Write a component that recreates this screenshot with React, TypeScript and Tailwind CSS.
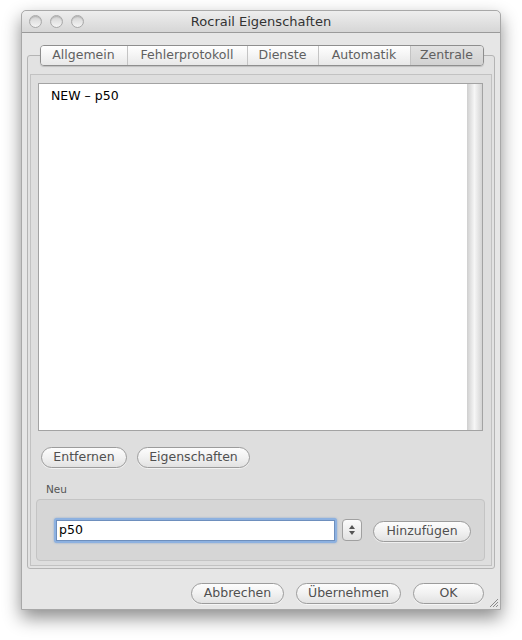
import React from "react";

const font = { fontFamily: '"Lucida Grande", "DejaVu Sans", sans-serif' };

function Pill({ label, w, className = "" }: { label: string; w: string; className?: string }) {
  return (
    <div
      className={`${w} h-[21px] rounded-full border border-[#9c9c9c] bg-gradient-to-b from-[#fdfdfd] via-[#f1f1f1] to-[#e2e2e2] shadow-[0_1px_0_rgba(255,255,255,0.6)] flex items-center justify-center text-[12.5px] text-[#505050] ${className}`}
    >
      {label}
    </div>
  );
}

function Light() {
  return (
    <div className="w-[13px] h-[13px] rounded-full border border-[#a9a9a9] bg-gradient-to-b from-[#d0d0d0] via-[#e4e4e4] to-[#f4f4f4] shadow-[inset_0_1px_1px_rgba(0,0,0,0.15)]" />
  );
}

export default function App() {
  const tabs = [
    { label: "Allgemein", w: "w-[86px]" },
    { label: "Fehlerprotokoll", w: "w-[120px]" },
    { label: "Dienste", w: "w-[71px]" },
    { label: "Automatik", w: "w-[92px]" },
    { label: "Zentrale", w: "w-[73px]", sel: true },
  ];
  return (
    <div className="w-[522px] h-[640px] bg-white pt-[10px] pl-[21px]" style={font}>
      <div className="w-[480px] h-[600px] bg-[#e6e6e6] rounded-t-[5px] border border-[#a8a8a8] shadow-[0_8px_18px_rgba(0,0,0,0.45)] flex flex-col relative">
        {/* Title bar */}
        <div className="h-[22px] shrink-0 rounded-t-[5px] bg-gradient-to-b from-[#eeeeee] to-[#d6d6d6] border-b border-[#9a9a9a] flex items-center relative">
          <div className="flex gap-[8px] pl-[7px]">
            <Light />
            <Light />
            <Light />
          </div>
          <div className="absolute inset-0 flex items-center justify-center text-[13px] text-[#333333]">
            Rocrail Eigenschaften
          </div>
        </div>

        {/* Body */}
        <div className="flex-1 flex flex-col pt-[12px] px-[5px]">
          {/* Tabs */}
          <div className="flex justify-center relative z-10 pl-[1px]">
            <div className="flex h-[21px] rounded-[4px] border border-[#8e8e8e] overflow-hidden shadow-[0_1px_1px_rgba(0,0,0,0.15)]">
              {tabs.map((t, i) => (
                <div
                  key={t.label}
                  className={`${t.w} h-full flex items-center justify-center text-[12.5px] text-[#606060] ${
                    i > 0 ? "border-l border-[#c4c4c4]" : ""
                  } ${
                    t.sel
                      ? "bg-gradient-to-b from-[#e2e2e2] to-[#d2d2d2]"
                      : "bg-gradient-to-b from-[#ffffff] via-[#f4f4f4] to-[#e8e8e8]"
                  }`}
                >
                  {t.label}
                </div>
              ))}
            </div>
          </div>

          {/* Tab pane */}
          <div className="mt-[-11px] h-[514px] border border-[#b4b4b4] rounded-[3px] bg-[#e2e2e2] p-[2px] pt-[18px]">
            <div className="h-full border border-[#c2c2c2] bg-[#dedede] flex flex-col pl-[7px] pr-[8px] pt-[8px]">
              {/* List */}
              <div className="h-[348px] border border-[#a3a3a3] bg-white flex">
                <div className="flex-1 pl-[12px] pt-[3px] text-[12.5px] text-black">NEW – p50</div>
                <div className="w-[15px] h-full bg-gradient-to-r from-[#cfcfcf] via-[#f6f6f6] to-[#d4d4d4]" />
              </div>

              {/* Buttons */}
              <div className="flex gap-[10px] mt-[16px] pl-[3px]">
                <Pill label="Entfernen" w="w-[86px]" />
                <Pill label="Eigenschaften" w="w-[113px]" />
              </div>

              {/* Neu */}
              <div className="mt-[15px] pl-[8px] text-[10.5px] text-[#555555] leading-[12px]">Neu</div>
              <div className="mt-[4px] ml-[-2px] mr-[-2px] h-[62px] rounded-[4px] border border-[#c4c4c4] bg-[#d6d6d6] flex items-center pl-[17px]">
                <div className="w-[283px] h-[25px] rounded-[3px] bg-[#8db1e0] p-[2px] shadow-[0_0_2px_rgba(80,130,200,0.6)]">
                  <div className="w-full h-full bg-white border border-[#6e8fbd] flex items-center pl-[2px] text-[12.5px] text-black">
                    p50
                  </div>
                </div>
                <div className="ml-[5px] w-[20px] h-[22px] rounded-[4px] border border-[#a0a0a0] bg-gradient-to-b from-[#fbfbfb] to-[#e2e2e2] flex flex-col items-center justify-center gap-[2px]">
                  <svg width="6" height="4" viewBox="0 0 6 4"><path d="M3 0 L6 4 L0 4 Z" fill="#555" /></svg>
                  <svg width="6" height="4" viewBox="0 0 6 4"><path d="M0 0 L6 0 L3 4 Z" fill="#555" /></svg>
                </div>
                <Pill label="Hinzufügen" w="w-[98px]" className="ml-[11px] mt-[3px]" />
              </div>
            </div>
          </div>

          {/* Bottom buttons */}
          <div className="flex justify-end gap-[12px] pr-[11px] mt-[14px]">
            <Pill label="Abbrechen" w="w-[93px]" />
            <Pill label="Übernehmen" w="w-[105px]" />
            <Pill label="OK" w="w-[71px]" />
          </div>
        </div>

        {/* Resize grip */}
        <svg className="absolute right-[1px] bottom-[1px]" width="11" height="11" viewBox="0 0 11 11">
          <path d="M10 2 L2 10 M10 5 L5 10 M10 8 L8 10" stroke="#8a8a8a" strokeWidth="1" />
        </svg>
      </div>
    </div>
  );
}
